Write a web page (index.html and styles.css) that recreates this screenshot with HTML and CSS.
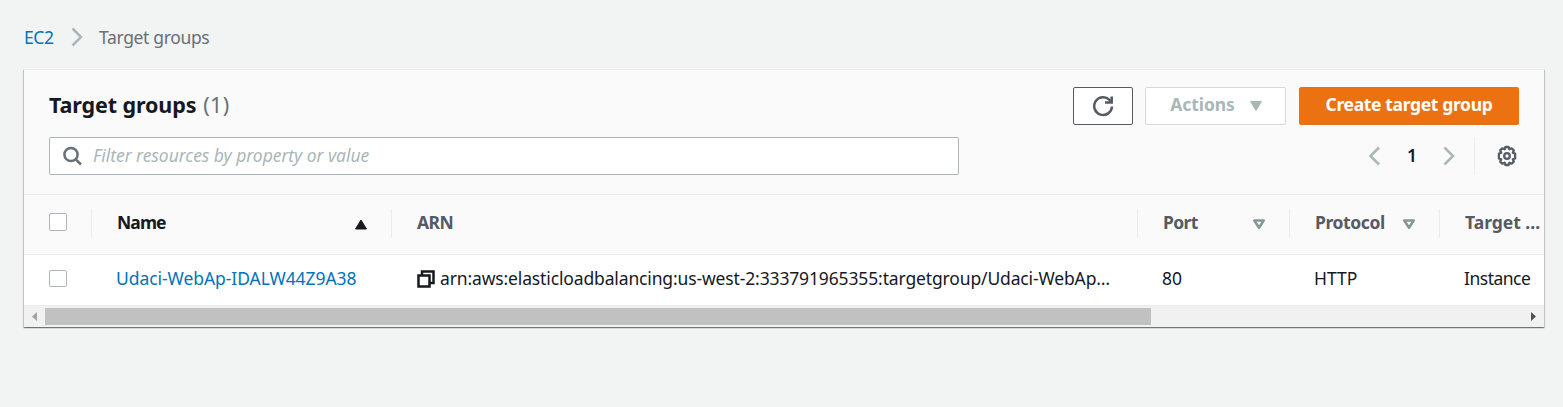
FILE: index.html
```html
<!DOCTYPE html>
<html lang="en">
<head>
<meta charset="utf-8">
<title>Target groups</title>
<link rel="stylesheet" href="styles.css">
</head>
<body>
<nav class="breadcrumb">
  <a class="crumb-link" href="#">EC2</a>
  <svg class="crumb-sep" width="12" height="20" viewBox="0 0 12 20"><path d="M1.500 1.500 10 10l-8.500 8.500"/></svg>
  <span class="crumb-current">Target groups</span>
</nav>
<main class="panel">
  <header class="panel-head">
    <div class="title-row">
      <h1 class="title"><span class="title-text">Target groups</span><span class="count">(1)</span></h1>
      <div class="buttons">
        <button class="btn btn-refresh"><svg width="22" height="22" viewBox="0 0 22 22"><path d="M20 11.500a8.900 8.900 0 1 1-2.500-6.600l2 2.200"/><path d="M19.700 1.500v6h-6.700"/></svg></button>
        <button class="btn btn-actions"><span class="actions-text">Actions</span><svg width="14" height="12" viewBox="0 0 14 12"><path d="M1.500 1.500h11L7 10.500z"/></svg></button>
        <button class="btn btn-create"><span class="create-text">Create target group</span></button>
      </div>
    </div>
    <div class="filter-row">
      <div class="filter">
        <svg width="20" height="20" viewBox="0 0 20 20"><circle cx="8" cy="8.500" r="6.600"/><path d="m12.700 13.300 5.300 5.200"/></svg>
        <span class="placeholder">Filter resources by property or value</span>
      </div>
      <div class="pager">
        <svg width="12" height="20" viewBox="0 0 12 20"><path d="M11 1.500 2.500 10l8.500 8.500"/></svg>
        <span class="page">1</span>
        <svg width="12" height="20" viewBox="0 0 12 20"><path d="M1.500 1.500 10 10l-8.500 8.500"/></svg>
        <span class="pager-rule"></span>
        <svg class="gear" width="22" height="22" viewBox="0 0 22 22"><path d="M9.500 2h3l.9 2.300 2.300-1 2.100 2.100-1 2.300 2.300.9v4.800l-2.300.9 1 2.300-2.100 2.100-2.300-1-.9 2.300h-3l-.9-2.300-2.300 1-2.100-2.100 1-2.300-2.300-.9V8.600l2.300-.9-1-2.300 2.100-2.100 2.300 1z"/><circle cx="11" cy="11" r="2.800"/></svg>
      </div>
    </div>
  </header>
  <section class="grid">
    <div class="row row-head">
      <div class="cell select"><span class="check"></span></div>
      <div class="cell sorted"><span class="h-name">Name</span><svg width="14" height="12" viewBox="0 0 14 12"><path class="up" d="M7 2 12.500 11h-11z"/></svg></div>
      <div class="cell"><span class="h-arn">ARN</span></div>
      <div class="cell"><span class="h-port">Port</span><svg width="14" height="12" viewBox="0 0 14 12"><path class="down" d="M2.300 2.500h9.400L7 9.700z"/></svg></div>
      <div class="cell"><span class="h-proto">Protocol</span><svg width="14" height="12" viewBox="0 0 14 12"><path class="down" d="M2.300 2.500h9.400L7 9.700z"/></svg></div>
      <div class="cell"><span class="h-target">Target ...</span></div>
    </div>
    <div class="row row-body">
      <div class="cell select"><span class="check"></span></div>
      <div class="cell"><a class="name-link" href="#">Udaci-WebAp-IDALW44Z9A38</a></div>
      <div class="cell arn-cell"><svg width="18" height="18" viewBox="0 0 18 18"><path d="M5 5V1.500h11.500V13H13M1.500 5.500H12.500v11H1.500z"/></svg><span class="arn">arn:aws:elasticloadbalancing:us-west-2:333791965355:targetgroup/Udaci-WebAp…</span></div>
      <div class="cell"><span class="v-port">80</span></div>
      <div class="cell"><span class="v-proto">HTTP</span></div>
      <div class="cell"><span class="v-target">Instance</span></div>
    </div>
  </section>
  <div class="scroll">
    <svg width="21" height="21" viewBox="0 0 21 21"><path class="arrow-off" d="M13 6v9l-5-4.500z"/></svg>
    <div class="track"><div class="thumb"></div></div>
    <svg width="21" height="21" viewBox="0 0 21 21"><path class="arrow-on" d="M8 6v9l5-4.500z"/></svg>
  </div>
</main>
</body>
</html>
```
FILE: styles.css
```css
* { box-sizing: border-box; }
body {
  margin: 0;
  padding: 24px 19px 0 24px;
  height: 407px;
  overflow: hidden;
  background: #f2f3f3;
  color: #16191f;
  font: 17.500px/26px "Noto Sans", "Open Sans", sans-serif;
  white-space: nowrap;
}
a { color: #0073bb; text-decoration: none; }
svg { flex: none; display: block; fill: none; stroke: #545b64; stroke-width: 2.500; }
.breadcrumb { display: flex; align-items: center; height: 45px; padding-bottom: 19px; }
.crumb-link, .crumb-current { padding-bottom: 1px; }
.crumb-link { width: 47px; letter-spacing: -.4px; }
.crumb-sep { stroke: #aab7b8; }
.crumb-current { margin-left: 16px; color: #687078; letter-spacing: -.35px; }
.panel {
  height: 258px;
  background: #fafafa;
  border-top: 1px solid #eaeded;
  box-shadow: 0 1px 1px 0 rgba(0,28,36,.4), 1px 1px 1px 0 rgba(0,28,36,.15), -1px 1px 1px 0 rgba(0,28,36,.15);
}
.panel-head { height: 125px; padding: 17px 25px 0; border-bottom: 1px solid #eaeded; }
.title-row { display: flex; justify-content: space-between; height: 38px; }
.title { display: flex; gap: 7px; margin: 0; font-size: 21.500px; line-height: 36px; }
.title-text { letter-spacing: -.12px; }
.count { color: #687078; font-weight: 400; letter-spacing: .3px; }
.buttons { display: flex; }
.btn { display: flex; align-items: center; justify-content: center; height: 38px; padding: 0 0 4px; border: 1px solid #545b64; border-radius: 2px; background: #fff; font: bold 17.500px/26px "Noto Sans", sans-serif; }
.btn-refresh { width: 60px; margin-right: 12px; padding: 0; }
.btn-actions { width: 141px; margin-right: 13px; padding-left: 2px; gap: 14px; border-color: #d5dbdb; color: #aab7b8; letter-spacing: -.1px; }
.btn-actions svg { margin-top: 4px; fill: #aab7b8; stroke: #aab7b8; stroke-width: 1; }
.btn-create { width: 220px; border-color: #ec7211; background: #ec7211; color: #fff; letter-spacing: -.35px; }
.filter-row { display: flex; justify-content: space-between; margin-top: 12px; height: 38px; }
.filter { display: flex; align-items: center; width: 910px; padding-left: 13px; border: 1px solid #aab7b8; border-radius: 2px; background: #fff; }
.filter svg { stroke: #687078; }
.placeholder { margin-left: 10px; padding-bottom: 2px; color: #aab7b8; font-style: italic; letter-spacing: -.05px; }
.pager { display: flex; align-items: center; width: 151px; }
.pager svg { stroke: #aab7b8; }
.page { width: 63px; padding: 0 0 2px 1px; text-align: center; font-weight: 600; }
.pager-rule { width: 1px; height: 38px; margin-left: 19px; background: #eaeded; }
.pager .gear { margin-left: 21px; stroke: #545b64; stroke-width: 2.300; stroke-linejoin: round; }
.row { display: grid; grid-template-columns: 68px 300px 746px 152px 150px 104px; align-items: center; overflow: hidden; }
.cell { display: flex; align-items: center; min-width: 0; padding-left: 24px; }
.row-head { height: 60px; padding-bottom: 3px; border-bottom: 1px solid #eaeded; color: #545b64; font-weight: 700; }
.row-head .cell { height: 29px; justify-content: space-between; padding: 0 23px 2px 25px; border-right: 1px solid #eaeded; }
.row .select { padding-left: 25px; }
.row-head .cell:last-child { padding-right: 0; border: 0; }
.row-head .sorted { color: #16191f; }
.row-head svg { margin-top: 3px; }
.h-name { letter-spacing: -.9px; }
.h-arn, .h-port { letter-spacing: -.6px; }
.h-proto { letter-spacing: -.4px; }
.h-target { letter-spacing: -.02px; }
.row-body { height: 51px; padding-bottom: 2px; background: #fff; border-bottom: 1px solid #eaeded; }
.row-body .cell > :not(svg):not(.check) { padding-bottom: 2px; }
.row .check { width: 18px; height: 18px; border: 1px solid #aab7b8; border-radius: 2px; background: #fff; }
.row-body .check { height: 17px; margin-bottom: 1px; }
.name-link { letter-spacing: -.06px; }
.v-target { letter-spacing: -.5px; }
.up { fill: #16191f; stroke: #16191f; stroke-width: 1; }
.down { stroke: #879596; stroke-width: 2.500; stroke-linejoin: round; }
.arn-cell svg { margin-left: 1px; stroke: #16191f; }
.arn { margin-left: 5px; letter-spacing: -.14px; }
.scroll { display: flex; height: 21px; background: #f1f1f1; }
.track { flex: 1; padding: 2px 0; }
.thumb { width: 1106px; height: 17px; background: #c1c1c1; }
.arrow-off { fill: #a3a3a3; stroke: none; }
.arrow-on { fill: #505050; stroke: none; }
```
